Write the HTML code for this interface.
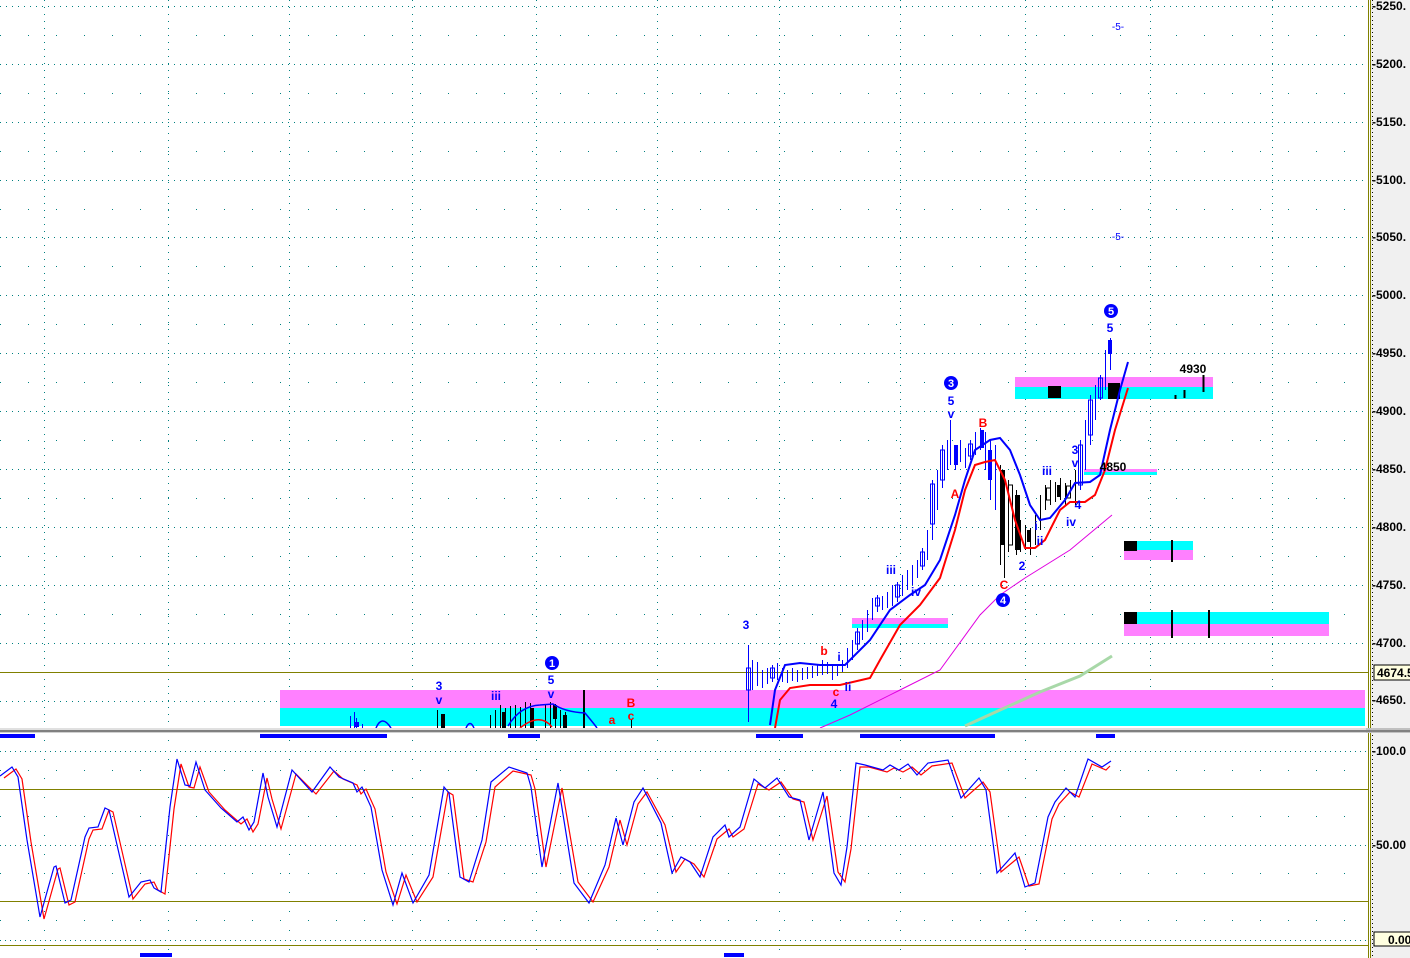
<!DOCTYPE html>
<html><head><meta charset="utf-8"><style>
html,body{margin:0;padding:0;background:#fff;overflow:hidden}
svg{display:block}
text{font-family:"Liberation Sans",sans-serif;font-weight:bold;font-size:12px}
.b{fill:#0000ff}.r{fill:#ff0000}.k{fill:#000}
.ax{font-size:12px;fill:#000}
.c{shape-rendering:crispEdges}
</style></head><body>
<svg width="1410" height="958" viewBox="0 0 1410 958" xmlns="http://www.w3.org/2000/svg">
<rect width="1410" height="958" fill="#fff"/>
<g stroke="#008080" stroke-width="1" stroke-dasharray="1,5" class="c">
<path d="M0 6.5H1366M0 64.5H1366M0 122.5H1366M0 180.5H1366M0 237.5H1366M0 295.5H1366M0 353.5H1366M0 411.5H1366M0 469.5H1366M0 527.5H1366M0 585.5H1366M0 643.5H1366M0 701.5H1366"/>
<path d="M44.5 0V728M168.5 0V728M289.5 0V728M412.5 0V728M536.5 0V728M657.5 0V728M779.5 0V728M900.5 0V728M1025.5 0V728M1150.5 0V728M1272.5 0V728" stroke-dasharray="1,6"/>
</g>
<g stroke="#008080" stroke-width="1" stroke-dasharray="1,27" class="c">
<path d="M0 35.5H1366M0 93.5H1366M0 151.5H1366M0 209.5H1366M0 266.5H1366M0 324.5H1366M0 382.5H1366M0 440.5H1366M0 498.5H1366M0 556.5H1366M0 614.5H1366"/>
</g>
<path d="M0 672.5H1368" stroke="#808000" stroke-width="1" class="c"/>
<rect x="280" y="690" width="1085" height="18" fill="#ff80ff"/>
<rect x="280" y="708" width="1085" height="18" fill="#00ffff"/>
<rect x="1015" y="377" width="198" height="10" fill="#ff80ff"/>
<rect x="1015" y="387" width="198" height="12" fill="#00ffff"/>
<rect x="1048" y="386" width="13" height="12" fill="#000"/>
<rect x="1108" y="383" width="12" height="16" fill="#000"/>
<path d="M1203.5 375V392M1184.5 390V398M1175.5 395V399" stroke="#000" stroke-width="2"/>
<rect x="1084" y="469" width="73" height="3" fill="#ff80ff"/>
<rect x="1084" y="472" width="73" height="3" fill="#00ffff"/>
<rect x="852" y="618" width="96" height="6" fill="#ff80ff"/>
<rect x="852" y="624" width="96" height="4" fill="#00ffff"/>
<rect x="1124" y="541" width="69" height="19" fill="#ff80ff"/>
<rect x="1137" y="541" width="56" height="9" fill="#00ffff"/>
<rect x="1124" y="541" width="13" height="10" fill="#000"/>
<path d="M1172 540V562" stroke="#000" stroke-width="2"/>
<rect x="1124" y="612" width="205" height="24" fill="#ff80ff"/>
<rect x="1137" y="612" width="192" height="12" fill="#00ffff"/>
<rect x="1124" y="612" width="13" height="12" fill="#000"/>
<path d="M1172 610V638M1209 610V638" stroke="#000" stroke-width="2"/>
<polyline points="965,726 1000,710 1040,692 1080,676 1112,656" fill="none" stroke="#a8d8a8" stroke-width="3"/>
<polyline points="820,728 850,715 900,690 940,670 980,615 1000,595 1025,578 1070,550 1112,515" fill="none" stroke="#e000e0" stroke-width="1"/>
<g transform="translate(0.5,0)" class="c">
<path stroke="#0000ff" stroke-width="1" fill="none" d="M748 645V722M752 660V690M757 662V686M762 670V688M767 668V684M772 665V682M777 663V680M782 668V682M787 670V683M792 668V681M797 670V682M802 668V680M807 667V679M812 666V678M817 664V676M822 660V675M827 662V674M832 666V680M837 664V676M842 660V672M847 648V668M852 640V660M857 628V650M862 620V640M867 610V632M872 598V620M877 595V612M882 596V610M887 592V608M892 585V606M897 582V602M902 575V596M907 570V590M912 565V585M917 560V578M922 548V570M927 530V560M932 480V540M937 470V510M942 445V488M947 440V470M950 420V465M955 445V470M960 440V462M965 448V468M970 440V460M975 432V455M980 428V450M985 432V470M990 440V500M995 445V510M1080 440V490M1085 420V470M1090 395V445M1095 385V420M1100 375V400M1105 350V390M1110 338V370"/>
<g fill="none" stroke="#0000ff" stroke-width="1">
<rect x="746" y="668" width="4" height="22"/><rect x="770" y="668" width="4" height="10"/><rect x="855" y="632" width="4" height="12"/><rect x="875" y="598" width="4" height="8"/><rect x="895" y="585" width="4" height="12"/><rect x="920" y="552" width="4" height="14"/><rect x="930" y="484" width="4" height="40"/><rect x="940" y="450" width="4" height="30"/><rect x="968" y="444" width="4" height="12"/><rect x="1078" y="445" width="4" height="40"/><rect x="1088" y="400" width="4" height="35"/><rect x="1098" y="378" width="4" height="20"/>
</g>
<path stroke="#000" stroke-width="1" d="M1000 465V565M1004 470V578M1008 480V552M1012 485V545M1016 490V555M1020 520V552M1025 525V550M1030 528V555M1035 515V545M1040 495V530M1045 485V510M1050 480V505M1055 482V502M1060 478V500M1065 483V505M1070 480V498M1075 470V505"/>
<rect x="1008" y="485" width="4" height="60" fill="none" stroke="#000"/>
<rect x="1046" y="488" width="4" height="12" fill="none" stroke="#000"/><rect x="1066" y="486" width="4" height="12" fill="none" stroke="#000"/>
<path stroke="#000" stroke-width="1" d="M437 710V728M441 716V728M490 715V728M495 710V728M500 705V728M505 708V728M510 706V728M515 705V728M520 707V728M525 702V728M530 703V728M545 705V728M550 702V728M555 704V728M560 710V728M565 712V728"/>
<path stroke="#0000ff" d="M350 716V728M354 712V728M356 718V728M362 724V728"/>
</g>
<rect x="954" y="445" width="4" height="20" fill="#0000ff"/><rect x="980" y="430" width="4" height="18" fill="#0000ff"/><rect x="988" y="450" width="4" height="30" fill="#0000ff"/><rect x="1108" y="340" width="4" height="14" fill="#0000ff"/>
<rect x="1001" y="470" width="4" height="75" fill="#000"/><rect x="1015" y="495" width="5" height="55" fill="#000"/>
<rect x="1027" y="530" width="4" height="12" fill="#000"/><rect x="1057" y="485" width="4" height="12" fill="#000"/>
<rect x="441" y="714" width="4" height="14" fill="#000"/><rect x="502" y="712" width="4" height="16" fill="#000"/><rect x="530" y="708" width="4" height="20" fill="#000"/><rect x="553" y="705" width="4" height="14" fill="#000"/><rect x="563" y="715" width="4" height="13" fill="#000"/>
<path d="M584 690V728" stroke="#000" stroke-width="2"/><path d="M631.5 720V728" stroke="#000"/>
<rect x="355" y="722" width="4" height="5" fill="#0000ff"/>
<path d="M376 728Q382 714 391 728M466 728Q470 719 474 728M508 726Q520 706 540 705L553 704Q565 712 585 713Q595 725 597 728" fill="none" stroke="#0000ff" stroke-width="1.5"/>
<path d="M520 728Q540 712 552 727" fill="none" stroke="#ff0000" stroke-width="1.5"/>
<polyline points="770,725 775,690 785,665 800,663 820,665 845,665 870,640 890,610 910,595 925,585 940,560 955,515 965,480 975,450 990,440 1000,438 1010,450 1020,475 1030,505 1040,520 1050,518 1065,500 1075,483 1090,482 1100,475 1110,430 1120,390 1128,362" fill="none" stroke="#0000ff" stroke-width="2"/>
<polyline points="775,728 780,700 790,688 810,685 840,685 870,678 880,660 900,625 920,605 940,578 955,530 965,490 975,465 985,462 995,460 1005,480 1015,520 1025,548 1035,548 1045,540 1060,510 1070,502 1085,502 1095,495 1105,470 1115,430 1128,388" fill="none" stroke="#ff0000" stroke-width="2"/>
<g text-anchor="middle">
<text x="1118" y="30" class="b" style="font-size:10px;font-weight:normal">-5-</text>
<text x="1118" y="240" class="b" style="font-size:10px;font-weight:normal">-5-</text>
<circle cx="1111" cy="311" r="7" fill="#0000ff"/><text x="1111" y="315" fill="#fff" style="font-size:11px">5</text>
<text x="1110" y="332" class="b">5</text>
<circle cx="951" cy="383" r="7" fill="#0000ff"/><text x="951" y="387" fill="#fff" style="font-size:11px">3</text>
<text x="951" y="405" class="b">5</text><text x="951" y="418" class="b">v</text>
<text x="983" y="427" class="r">B</text><text x="955" y="498" class="r">A</text><text x="1004" y="589" class="r">C</text>
<circle cx="1003" cy="600" r="7" fill="#0000ff"/><text x="1003" y="604" fill="#fff" style="font-size:11px">4</text>
<text x="1022" y="570" class="b">2</text><text x="1047" y="475" class="b">iii</text>
<text x="1036" y="530" class="b">i</text><text x="1040" y="545" class="b">ii</text>
<text x="1075" y="454" class="b">3</text><text x="1075" y="467" class="b">v</text>
<text x="1078" y="509" class="b">4</text><text x="1071" y="526" class="b">iv</text>
<text x="1193" y="373" class="k">4930</text><text x="1113" y="471" class="k">4850</text>
<text x="891" y="574" class="b">iii</text><text x="916" y="596" class="b">iv</text>
<text x="746" y="629" class="b">3</text><text x="824" y="655" class="r">b</text>
<text x="839" y="661" class="b">i</text><text x="836" y="696" class="r">c</text>
<text x="848" y="691" class="b">ii</text><text x="834" y="708" class="b">4</text>
<circle cx="552" cy="663" r="7" fill="#0000ff"/><text x="552" y="667" fill="#fff" style="font-size:11px">1</text>
<text x="551" y="684" class="b">5</text><text x="551" y="698" class="b">v</text>
<text x="439" y="690" class="b">3</text><text x="439" y="704" class="b">v</text>
<text x="496" y="700" class="b">iii</text>
<text x="631" y="707" class="r">B</text><text x="631" y="720" class="r">c</text><text x="612" y="724" class="r">a</text>
</g>
<rect x="0" y="728" width="1410" height="2" fill="#e0e0e0"/>
<rect x="0" y="730" width="1410" height="2" fill="#808080"/>
<rect x="0" y="732" width="1410" height="1" fill="#d0d0d0"/>
<g fill="#0000ff">
<rect x="0" y="734" width="35" height="4"/><rect x="260" y="734" width="127" height="4"/><rect x="508" y="734" width="32" height="4"/><rect x="756" y="734" width="47" height="4"/><rect x="860" y="734" width="135" height="4"/><rect x="1096" y="734" width="19" height="4"/>
<rect x="140" y="953" width="32" height="4"/><rect x="724" y="953" width="20" height="4"/>
</g>
<g stroke="#008080" stroke-dasharray="1,4" class="c">
<path d="M0 751.5H1366M0 845.5H1366M0 940.5H1366"/>
</g>
<g stroke="#008080" stroke-dasharray="1,27" class="c">
<path d="M0 770.5H1366M0 816.5H1366M0 873.5H1366M0 920.5H1366"/>
</g>
<g stroke="#008080" stroke-dasharray="1,18" class="c">
<path d="M44.5 740V958M168.5 740V958M289.5 740V958M412.5 740V958M536.5 740V958M657.5 740V958M779.5 740V958M900.5 740V958M1025.5 740V958"/>
</g>
<path d="M0 789.5H1368M0 901.5H1368M0 945.5H1368" stroke="#808000" class="c"/>
<g fill="none" stroke-width="1.2">
<polyline stroke="#ff0000" transform="translate(4,2)" points="0,776 12,767 18,777 27,840 40,917 54,867 56,866 65,903 71,900 85,837 89,828 98,827 105,808 109,810 129,897 141,882 150,880 154,888 161,892 170,807 177,762 185,785 190,786 196,765 205,790 221,808 237,822 243,817 249,830 254,822 263,776 268,797 277,827 292,772 312,792 330,769 339,777 353,783 357,792 362,787 371,807 382,870 393,902 402,873 413,900 429,875 444,790 449,793 460,877 469,880 482,840 491,785 509,769 527,773 531,787 542,865 558,786 574,880 589,900 605,865 616,818 623,843 634,802 643,790 661,823 672,870 681,857 690,862 700,875 713,837 725,827 729,835 740,827 754,782 765,788 777,780 789,797 800,800 809,838 823,794 834,870 841,880 847,847 856,765 865,765 883,770 890,766 899,770 908,765 917,773 928,764 948,761 961,796 979,780 986,790 997,870 1015,855 1025,884 1035,882 1048,817 1055,802 1066,790 1075,795 1088,762 1102,768 1106,764"/>
<polyline stroke="#0000ff" points="0,776 12,767 18,777 27,840 40,917 54,867 56,866 65,903 71,900 85,837 89,828 98,827 105,808 109,810 129,897 141,882 150,880 154,888 161,892 170,807 177,759 185,785 190,786 196,762 205,790 221,808 237,822 243,817 249,830 254,822 263,773 268,797 277,827 292,770 312,792 330,767 339,777 353,783 357,792 362,787 371,807 382,870 393,905 402,873 413,903 429,875 444,787 449,793 460,877 469,882 482,840 491,782 509,767 527,773 531,787 542,867 558,783 574,883 589,903 605,865 616,818 623,845 634,802 643,788 661,823 672,873 681,857 690,862 700,877 713,837 725,825 729,837 740,827 754,779 765,788 777,778 789,797 800,800 809,840 823,792 834,873 841,885 847,847 856,763 865,765 883,770 890,765 899,770 908,764 917,775 928,763 948,760 961,798 979,778 986,790 997,873 1015,853 1025,887 1035,883 1048,817 1055,802 1066,788 1075,797 1088,759 1102,767 1111,761"/>
</g>
<rect x="1371" y="0" width="39" height="958" fill="#f0f0f0"/>
<path d="M1368.5 0V958M1370.5 0V958" stroke="#808000" class="c"/>
<path d="M1372.5 0V728M1372.5 735V958" stroke="#000" stroke-dasharray="1,3" class="c"/>
<rect x="1366" y="728" width="44" height="5" fill="#c0c0c0"/><rect x="1366" y="730" width="44" height="2" fill="#808080"/>
<g class="ax">
<text x="1372" y="10">-5250.</text><text x="1372" y="68">-5200.</text><text x="1372" y="126">-5150.</text><text x="1372" y="184">-5100.</text><text x="1372" y="241">-5050.</text><text x="1372" y="299">-5000.</text><text x="1372" y="357">-4950.</text><text x="1372" y="415">-4900.</text><text x="1372" y="473">-4850.</text><text x="1372" y="531">-4800.</text><text x="1372" y="589">-4750.</text><text x="1372" y="647">-4700.</text><text x="1372" y="704">-4650.</text>
<text x="1372" y="755">-100.0</text><text x="1372" y="849">-50.00</text>
</g>
<rect x="1374" y="665" width="40" height="15" fill="#ffffe0" stroke="#000"/>
<text x="1377" y="677" class="ax">4674.5</text>
<rect x="1374" y="932" width="40" height="14" fill="#ffffe0" stroke="#000"/>
<text x="1388" y="944" class="ax">0.00</text>
</svg>
</body></html>
